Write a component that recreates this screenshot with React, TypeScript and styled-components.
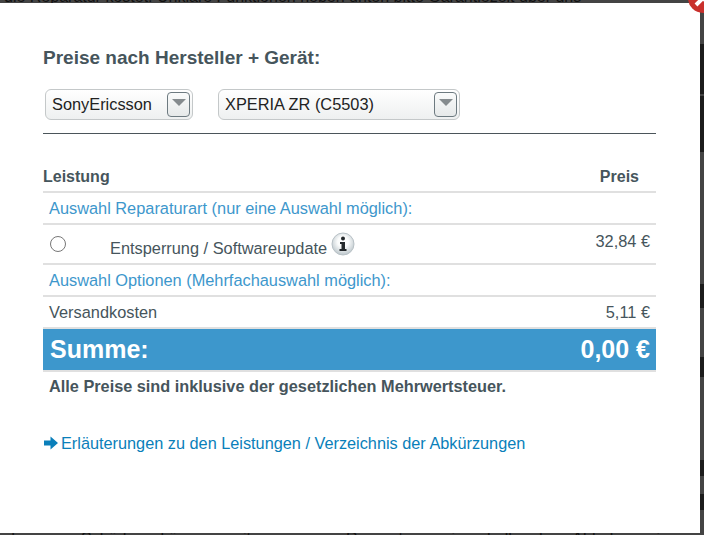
import React from "react";
import styled, { createGlobalStyle } from "styled-components";

const GlobalStyle = createGlobalStyle`
  html, body {
    margin: 0;
    padding: 0;
    background: #444444;
  }
  body {
    font-family: "Liberation Sans", Arial, sans-serif;
  }
`;

const Page = styled.div`
  position: relative;
  width: 704px;
  height: 535px;
  overflow: hidden;
  background: #444444;
`;

const BackdropLine = styled.div<{ $top: number; $left: number }>`
  position: absolute;
  top: ${props => props.$top}px;
  left: ${props => props.$left}px;
  white-space: nowrap;
  font-size: 16px;
  line-height: 18px;
  word-spacing: ${props => (props.$top > 0 ? 12 : 0)}px;
  color: #111111;
`;

// dark bits of the page behind the dialog, showing at its right edge
const BackdropPatch = styled.div<{ $top: number; $height: number }>`
  position: absolute;
  top: ${props => props.$top}px;
  right: 0;
  width: 4px;
  height: ${props => props.$height}px;
  background: #1c1c1c;
`;

const Modal = styled.div`
  position: absolute;
  top: 3px;
  left: 0;
  box-sizing: border-box;
  width: 700px;
  height: 530px;
  padding: 43px 44px 0 43px;
  background: #ffffff;
`;

const CloseButton = styled.svg`
  position: absolute;
  top: -20px;
  right: -18px;
`;

const Heading = styled.h2`
  margin: 0;
  font-size: 19px;
  line-height: 24px;
  font-weight: bold;
  color: #46555c;
`;

const SelectRow = styled.div`
  display: flex;
  gap: 25px;
  margin: 19px 0 0 2px;
  padding-bottom: 13px;
`;

const Select = styled.div<{ $width: number }>`
  box-sizing: border-box;
  display: flex;
  align-items: center;
  justify-content: space-between;
  width: ${props => props.$width}px;
  height: 31px;
  padding: 0 2px 0 6px;
  border: 1px solid #c4c8c9;
  border-radius: 6px;
  background: linear-gradient(#ffffff, #eef0f0);
  font-size: 16.35px;
  color: #222222;
`;

const SelectArrow = styled.span`
  box-sizing: border-box;
  display: flex;
  align-items: center;
  justify-content: center;
  width: 23px;
  height: 25px;
  border: 1px solid #6d7a80;
  border-radius: 4px;
  background: linear-gradient(#fafbfb, #e6e9e9);
  &::after {
    content: "";
    margin-bottom: 4px;
    border-left: 7px solid transparent;
    border-right: 7px solid transparent;
    border-top: 7px solid #858b8e;
  }
`;

const Divider = styled.hr`
  margin: 0;
  border: 0;
  border-top: 1px solid #4b555a;
`;

const HeaderRow = styled.div`
  display: flex;
  align-items: center;
  justify-content: space-between;
  height: 59px;
  padding: 28px 17px 0 0;
  box-sizing: border-box;
  border-bottom: 2px solid #e0e0e0;
  font-size: 16px;
  font-weight: bold;
  color: #46555c;
`;

const Row = styled.div<{ $height: number }>`
  box-sizing: border-box;
  display: flex;
  align-items: center;
  justify-content: space-between;
  height: ${props => props.$height}px;
  padding: 0 6px;
  border-bottom: 2px solid #e0e0e0;
  font-size: 16.35px;
  color: #46555c;
`;

const SectionLabel = styled.span`
  color: #3d97cc;
`;

const ServiceCell = styled.span`
  display: flex;
  align-items: flex-start;
  align-self: stretch;
`;

const Radio = styled.span`
  box-sizing: border-box;
  display: block;
  width: 16px;
  height: 16px;
  margin: 11px 44px 0 1px;
  border: 1px solid #777777;
  border-radius: 50%;
  background: #ffffff;
`;

const ServiceName = styled.span`
  margin-top: 14px;
`;

const InfoIcon = styled.svg`
  margin: 7px 0 0 4px;
`;

const Price = styled.span<{ $raise?: number }>`
  margin-top: ${props => -(props.$raise ?? 0)}px;
`;

const TotalRow = styled.div`
  box-sizing: border-box;
  display: flex;
  align-items: center;
  justify-content: space-between;
  height: 41px;
  padding: 0 6px 0 7px;
  background: #3d97cc;
  font-size: 25px;
  font-weight: bold;
  color: #ffffff;
`;

const TotalRule = styled.div`
  height: 2px;
  background: #e0e0e0;
`;

const TaxNote = styled.p`
  margin: 5px 0 0 6px;
  font-size: 16.3px;
  line-height: 18px;
  font-weight: bold;
  color: #46555c;
`;

const InfoLink = styled.a`
  display: flex;
  align-items: center;
  margin: 38px 0 0 0;
  font-size: 16.3px;
  line-height: 20px;
  color: #0a7fba;
`;

const LinkArrow = styled.svg`
  margin: 0 3px 0 1px;
`;

const patches = [
  { top: 44, height: 50 },
  { top: 96, height: 56 },
  { top: 284, height: 24 },
  { top: 357, height: 20 },
  { top: 460, height: 16 },
  { top: 494, height: 16 },
];

const App: React.FC = () => {
  return (
    <Page>
      <GlobalStyle />
      <BackdropLine $top={-12} $left={4}>
        die Reparatur kostet. Unklare Funktionen neben unten bitte Garantiezeit über uns
      </BackdropLine>
      <BackdropLine $top={530} $left={6}>
        das
      </BackdropLine>
      <BackdropLine $top={530} $left={81}>
        Schäden können mit unserem Reparaturen innerhalb der Abholung in
      </BackdropLine>
      {patches.map((patch, index) => (
        <BackdropPatch key={index} $top={patch.top} $height={patch.height} />
      ))}
      <Modal>
        <CloseButton width="30" height="30" viewBox="0 0 30 30">
          <circle cx="15" cy="15" r="15" fill="#c9302c" />
          <path d="M8 8 L22 22 M22 8 L8 22" stroke="#ffffff" strokeWidth="4" />
        </CloseButton>
        <Heading>Preise nach Hersteller + Gerät:</Heading>
        <SelectRow>
          <Select $width={148}>
            SonyEricsson
            <SelectArrow />
          </Select>
          <Select $width={242}>
            XPERIA ZR (C5503)
            <SelectArrow />
          </Select>
        </SelectRow>
        <Divider />
        <HeaderRow>
          <span>Leistung</span>
          <span>Preis</span>
        </HeaderRow>
        <Row $height={32}>
          <SectionLabel>Auswahl Reparaturart (nur eine Auswahl möglich):</SectionLabel>
        </Row>
        <Row $height={40}>
          <ServiceCell>
            <Radio />
            <ServiceName>Entsperrung / Softwareupdate</ServiceName>
            <InfoIcon width="24" height="24" viewBox="0 0 24 24">
              <defs>
                <radialGradient id="infoFill" cx="0.5" cy="0.4" r="0.6">
                  <stop offset="0.4" stopColor="#fbfcfc" />
                  <stop offset="1" stopColor="#bcc6cb" />
                </radialGradient>
              </defs>
              <circle cx="12" cy="12" r="11" fill="url(#infoFill)" stroke="#b8c1c6" />
              <circle cx="12" cy="6.5" r="2" fill="#23282b" />
              <path d="M9 10 H14 V17 H15.5 V19 H8.5 V17 H10.5 V12 H9 Z" fill="#23282b" />
            </InfoIcon>
          </ServiceCell>
          <Price $raise={6}>32,84 €</Price>
        </Row>
        <Row $height={32}>
          <SectionLabel>Auswahl Optionen (Mehrfachauswahl möglich):</SectionLabel>
        </Row>
        <Row $height={32}>
          <span>Versandkosten</span>
          <span>5,11 €</span>
        </Row>
        <TotalRow>
          <span>Summe:</span>
          <span>0,00 €</span>
        </TotalRow>
        <TotalRule />
        <TaxNote>Alle Preise sind inklusive der gesetzlichen Mehrwertsteuer.</TaxNote>
        <InfoLink>
          <LinkArrow width="14" height="14" viewBox="0 0 14 14">
            <path d="M0 4.5 H6.5 V0.5 L14 7 L6.5 13.5 V9.5 H0 Z" fill="#0a7fba" />
          </LinkArrow>
          Erläuterungen zu den Leistungen / Verzeichnis der Abkürzungen
        </InfoLink>
      </Modal>
    </Page>
  );
};

export default App;
